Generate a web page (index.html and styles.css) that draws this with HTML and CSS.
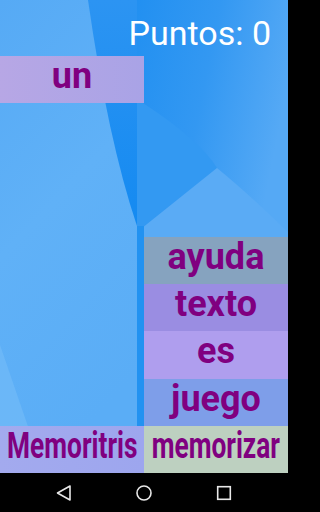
FILE: index.html
```html
<!DOCTYPE html>
<html lang="es">
<head>
<meta charset="utf-8">
<title>Memoritris</title>
<link rel="stylesheet" href="styles.css">
</head>
<body>
<div class="screen">
  <div class="game">
    <svg class="wallpaper" width="288" height="473" viewBox="0 0 288 473" aria-hidden="true">
      <defs>
        <linearGradient id="gLeft" x1="0" y1="0" x2="0.3" y2="1">
          <stop offset="0" stop-color="#56AAF5"/>
          <stop offset="0.5" stop-color="#60B1F7"/>
          <stop offset="1" stop-color="#5AADF6"/>
        </linearGradient>
        <linearGradient id="gWedge" x1="0" y1="0" x2="0" y2="1">
          <stop offset="0" stop-color="#2C94F2"/>
          <stop offset="1" stop-color="#148AF1"/>
        </linearGradient>
        <linearGradient id="gRight" x1="0" y1="0" x2="0.8" y2="0.5">
          <stop offset="0" stop-color="#2290F1"/>
          <stop offset="0.5" stop-color="#3398F2"/>
          <stop offset="1" stop-color="#55A9F5"/>
        </linearGradient>
      </defs>
      <rect x="0" y="0" width="288" height="473" fill="#3C9EF4"/>
      <rect x="0" y="0" width="137" height="473" fill="url(#gLeft)"/>
      <path d="M88 0 L137 0 L137 226 Q108 140 88 0 Z" fill="url(#gWedge)"/>
      <rect x="137" y="0" width="151" height="473" fill="url(#gRight)"/>
      <path d="M137 103 L143 103 Q200 140 217 168 L137 232 Z" fill="#3399F2"/>
      <path d="M137 232 L217 168 Q250 195 288 232 L288 473 L137 473 Z" fill="#5AABF5"/>
      <rect x="137" y="226" width="7" height="247" fill="#2292F1"/>
      <path d="M0 345 L0 473 L44 473 Z" fill="#74BDF8" opacity="0.6"/>
    </svg>

    <div class="score">Puntos: 0</div>

    <div class="row">
      <div class="tile tile-un">un</div>
    </div>

    <div class="spacer"></div>

    <div class="stack">
      <div class="tile tile-ayuda">ayuda</div>
      <div class="tile tile-texto">texto</div>
      <div class="tile tile-es">es</div>
      <div class="tile tile-juego">juego</div>
    </div>

    <div class="row">
      <div class="tile tile-memoritris"><span class="narrow">Memoritris</span></div>
      <div class="tile tile-memorizar"><span class="narrow">memorizar</span></div>
    </div>
  </div>

  <nav class="navbar">
    <svg class="nav-icon" width="20" height="20" viewBox="0 0 20 20" aria-hidden="true">
      <path d="M3.5 10 L16 3 L16 17 Z" fill="none" stroke="#E8E8E8" stroke-width="1.6" stroke-linejoin="round"/>
    </svg>
    <svg class="nav-icon" width="20" height="20" viewBox="0 0 20 20" aria-hidden="true">
      <circle cx="10" cy="10" r="7" fill="none" stroke="#E8E8E8" stroke-width="1.6"/>
    </svg>
    <svg class="nav-icon" width="20" height="20" viewBox="0 0 20 20" aria-hidden="true">
      <rect x="3.7" y="3.7" width="12.6" height="12.6" fill="none" stroke="#E8E8E8" stroke-width="1.6"/>
    </svg>
  </nav>
</div>
</body>
</html>
```

FILE: styles.css
```css
html, body {
  margin: 0;
  padding: 0;
  background: #000;
}

body {
  width: 288px;
  height: 512px;
  overflow: hidden;
  font-family: Roboto, "Liberation Sans", sans-serif;
}

.screen {
  width: 288px;
  height: 512px;
  display: flex;
  flex-direction: column;
}

.game {
  position: relative;
  height: 473px;
  display: flex;
  flex-direction: column;
  overflow: hidden;
}

.wallpaper {
  position: absolute;
  left: 0;
  top: 0;
  z-index: 0;
}

.score,
.row,
.stack,
.spacer {
  position: relative;
  z-index: 1;
}

.score {
  height: 56px;
  box-sizing: border-box;
  padding-top: 12px;
  padding-right: 17px;
  text-align: right;
  color: #FFFFFF;
  font-size: 34px;
  line-height: 42px;
  font-weight: 400;
}

.row {
  display: flex;
}

.spacer {
  flex: 1;
}

.stack {
  margin-left: 144px;
  width: 144px;
  display: flex;
  flex-direction: column;
}

.tile {
  width: 144px;
  height: 47.2px;
  flex-shrink: 0;
  display: flex;
  justify-content: center;
  align-items: flex-start;
  line-height: 41px;
  color: #800080;
  font-size: 36px;
  font-weight: 700;
  white-space: nowrap;
}

.narrow {
  display: block;
  flex-shrink: 0;
  transform: scaleX(0.73);
  transform-origin: center;
}

.tile-un { background: linear-gradient(90deg, #B7A7E5, #A9A3E6); }
.tile-ayuda { background: #86A3BF; }
.tile-texto { background: #9A8DE2; }
.tile-es { background: #AF9EEE; }
.tile-juego { background: #7E9EE9; }
.tile-memoritris { background: linear-gradient(90deg, #A3AAEE, #9DA6EE); }
.tile-memorizar { background: #BDD0C0; }

.navbar {
  height: 39px;
  background: #000;
  display: flex;
  align-items: center;
  justify-content: center;
  gap: 60px;
}

.nav-icon {
  display: block;
}
```
